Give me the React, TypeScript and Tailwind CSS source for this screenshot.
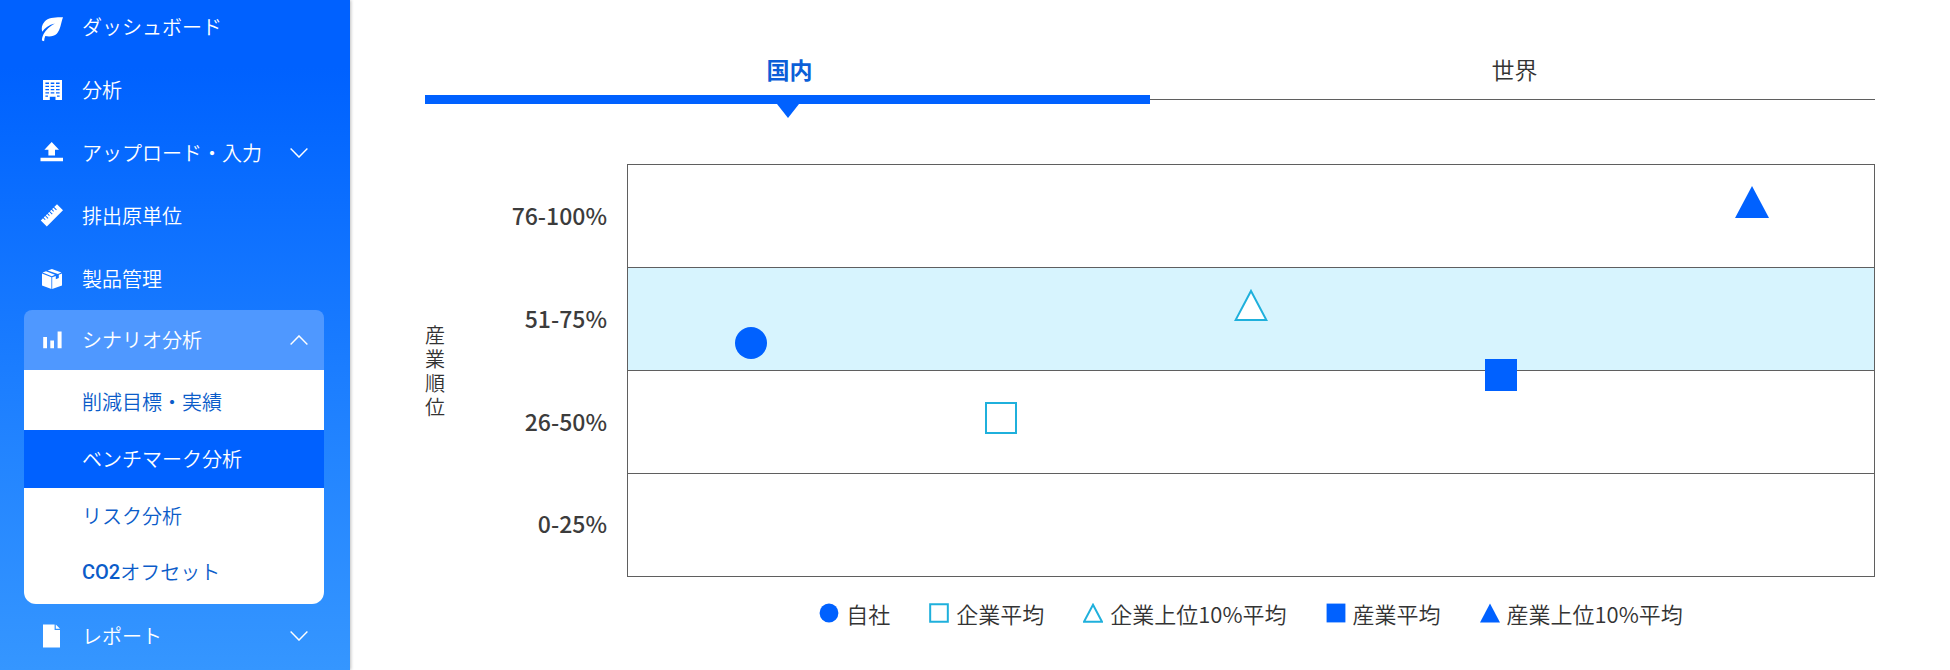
import { useState } from "react";
import type { ReactNode } from "react";

type IconProps = { children: ReactNode };

function Icon({ children }: IconProps) {
  return (
    <svg viewBox="0 0 24 24" className="size-6 shrink-0 overflow-visible" fill="currentColor" aria-hidden="true">
      {children}
    </svg>
  );
}

function LeafIcon() {
  return (
    <Icon>
      <path d="M23 2.3C15.4 2.1 8.4 2.6 4.7 6.4C1.7 9.5 1.2 13 2.2 16.8C5 12.6 8.9 9.9 14.8 8.4C9.7 11.2 5.9 14.7 3.6 19C2.5 21.2 1.9 23.3 1.9 25.6L4.1 26.2C4.2 24.4 4.6 22.6 5.3 21C9.5 22 13.9 21.4 16.8 18.7C20.6 15 20.8 8 23 2.3Z" />
    </Icon>
  );
}

function BuildingIcon() {
  return (
    <Icon>
      <path
        fillRule="evenodd"
        d="M3 2H22V22H15.5V18.8H9.8V22H3ZM5.4 4.6V5.9H9V4.6ZM10.7 4.6V5.9H14.3V4.6ZM16 4.6V5.9H19.6V4.6ZM5.4 7.8V9.1H9V7.8ZM10.7 7.8V9.1H14.3V7.8ZM16 7.8V9.1H19.6V7.8ZM5.4 11V12.3H9V11ZM10.7 11V12.3H14.3V11ZM16 11V12.3H19.6V11ZM5.4 14.2V15.5H9V14.2ZM10.7 14.2V15.5H14.3V14.2ZM16 14.2V15.5H19.6V14.2ZM5.4 17.4V18.7H8V17.4ZM17 17.4V18.7H19.6V17.4Z"
      />
    </Icon>
  );
}

function UploadIcon() {
  return (
    <Icon>
      <path d="M11.7 1L19 8.8H15V14.5H8.4V8.8H4.4ZM0.5 16.7H23V20.3H0.5Z" />
    </Icon>
  );
}

function RulerIcon() {
  return (
    <Icon>
      <path d="M0.8 16.4L3 14.2L4.9 16.1L5.6 15.4L3.7 13.5L5.1 12.1L7.7 14.7L8.4 14L5.8 11.4L7.2 10L9.1 11.9L9.8 11.2L7.9 9.3L9.3 7.9L11.9 10.5L12.6 9.8L10 7.2L11.4 5.8L13.3 7.7L14 7L12.1 5.1L13.5 3.7L16.1 6.3L16.8 5.6L14.2 3L17 0.2L23 6.2L6.8 22.4Z" />
    </Icon>
  );
}

function BoxIcon() {
  return (
    <Icon>
      <path d="M2 6.6L11.4 10.3V22L2 18.4ZM12.2 10.3L15.8 8.9V12.3L18.8 11.1V7.7L22 6.5V18.4L12.2 22ZM2.6 5.6L6 4.3L15 7.8L11.8 9.2ZM7.6 3.6L11.9 1.9L21.4 5.5L17.9 6.9Z" />
    </Icon>
  );
}

function BarsIcon() {
  return (
    <Icon>
      <path d="M3.2 9H7V20.3H3.2ZM10.3 12.6H14V20.3H10.3ZM17.6 3.4H21.6V20.3H17.6Z" />
    </Icon>
  );
}

function DocumentIcon() {
  return (
    <Icon>
      <path d="M3 0.5H14.6V6H20V23.5H3ZM15.8 0.5L20 4.8H15.8Z" />
    </Icon>
  );
}

function Chevron({ up = false }: { up?: boolean }) {
  return (
    <svg
      viewBox="0 0 18 10"
      className="ml-auto h-[10px] w-[18px]"
      fill="none"
      stroke="currentColor"
      strokeWidth="1.4"
      aria-hidden="true"
    >
      <path d={up ? "M0.6 9.4L9 0.9L17.4 9.4" : "M0.6 0.6L9 9.1L17.4 0.6"} />
    </svg>
  );
}

const rowClass = "flex h-[63px] w-full items-center gap-[18px] pr-4 pl-4 text-left text-white";

function NavLink({ icon, label }: { icon: ReactNode; label: string }) {
  return (
    <li>
      <a href="#" className={rowClass}>
        {icon}
        <span>{label}</span>
      </a>
    </li>
  );
}

function NavGroup({ icon, label }: { icon: ReactNode; label: string }) {
  return (
    <li>
      <button type="button" aria-expanded="false" className={rowClass}>
        {icon}
        <span>{label}</span>
        <Chevron />
      </button>
    </li>
  );
}

function Sidebar() {
  return (
    <aside className="w-[350px] shrink-0 overflow-hidden bg-linear-to-b from-[#0061ff] from-10% to-[#3596ff] pr-[26px] pl-6 text-xl font-[350] shadow-[1px_0_3px_rgba(0,0,0,0.25)]">
      <nav className="-mt-[5px]">
        <ul>
          <NavLink icon={<LeafIcon />} label="ダッシュボード" />
          <NavLink icon={<BuildingIcon />} label="分析" />
          <NavGroup icon={<UploadIcon />} label="アップロード・入力" />
          <NavLink icon={<RulerIcon />} label="排出原単位" />
          <NavLink icon={<BoxIcon />} label="製品管理" />
          <li className="overflow-hidden rounded-t-lg rounded-b-xl">
            <button
              type="button"
              aria-expanded="true"
              className="flex h-[60px] w-full items-center gap-[18px] bg-[#4f98ff] pr-4 pl-4 text-left text-white"
            >
              <BarsIcon />
              <span>シナリオ分析</span>
              <Chevron up />
            </button>
            <ul className="bg-white pb-1 text-[#0b5cc9]">
              <li>
                <a href="#" className="flex h-[60px] items-center pt-1 pl-[58px]">
                  削減目標・実績
                </a>
              </li>
              <li>
                <a
                  href="#"
                  aria-current="page"
                  className="flex h-[58px] items-center bg-[#0061ff] pl-[58px] text-white"
                >
                  ベンチマーク分析
                </a>
              </li>
              <li>
                <a href="#" className="flex h-14 items-center pl-[58px]">
                  リスク分析
                </a>
              </li>
              <li>
                <a href="#" className="flex h-14 items-center pl-[58px]">
                  <span className="font-['Roboto','Noto_Sans_CJK_JP',sans-serif] font-medium">CO2</span>
                  オフセット
                </a>
              </li>
            </ul>
          </li>
          <NavGroup icon={<DocumentIcon />} label="レポート" />
        </ul>
      </nav>
    </aside>
  );
}

type Shape = "circle" | "square-outline" | "triangle-outline" | "square" | "triangle";

function Marker({ shape, className }: { shape: Shape; className: string }) {
  const outline = { fill: "#ffffff", stroke: "#1fb0dc", strokeWidth: 2, vectorEffect: "non-scaling-stroke" as const };
  return (
    <svg viewBox="0 0 34 34" className={className} fill="#0061ff" aria-hidden="true">
      {shape === "circle" && <circle cx="17" cy="17" r="16" />}
      {shape === "square" && <rect x="1" y="1" width="32" height="32" />}
      {shape === "triangle" && <path d="M17 1L34 33H0Z" />}
      {shape === "square-outline" && <rect x="2" y="2" width="30" height="30" {...outline} />}
      {shape === "triangle-outline" && <path d="M17 3L32.4 32H1.6Z" {...outline} />}
    </svg>
  );
}

const series: { name: string; shape: Shape; left: string; top: string }[] = [
  { name: "自社", shape: "circle", left: "9.9%", top: "43.5%" },
  { name: "企業平均", shape: "square-outline", left: "29.9%", top: "61.6%" },
  { name: "企業上位10%平均", shape: "triangle-outline", left: "50%", top: "34.2%" },
  { name: "産業平均", shape: "square", left: "70.1%", top: "51.2%" },
  { name: "産業上位10%平均", shape: "triangle", left: "90.2%", top: "9.2%" },
];

const bands = [
  { label: "76-100%", active: false },
  { label: "51-75%", active: true },
  { label: "26-50%", active: false },
  { label: "0-25%", active: false },
];

const tabs = ["国内", "世界"];

function Tabs() {
  const [selected, setSelected] = useState(0);
  return (
    <div role="tablist" className="flex">
      {tabs.map((tab, index) => {
        const active = index === selected;
        return (
          <button
            key={tab}
            type="button"
            role="tab"
            aria-selected={active}
            onClick={() => setSelected(index)}
            className="flex flex-1 flex-col text-[23px]"
          >
            <span
              className={
                active
                  ? "flex h-[50px] w-full items-center justify-center pb-0.5 pl-1 font-bold text-[#0b5fd8]"
                  : "flex h-[50px] w-full items-center justify-center pb-0.5 pl-1 font-[350] text-[#333333]"
              }
            >
              {tab}
            </span>
            <span className="relative flex h-[9px] w-full items-center">
              <span className={active ? "h-full w-full bg-[#0061ff]" : "h-px w-full bg-[#5f5f5f]"} />
              {active && (
                <svg
                  viewBox="0 0 22 14"
                  className="absolute top-full left-1/2 h-[14px] w-[22px] -translate-x-1/2"
                  fill="#0061ff"
                  aria-hidden="true"
                >
                  <path d="M0 0H22L11 14Z" />
                </svg>
              )}
            </span>
          </button>
        );
      })}
    </div>
  );
}

function BenchmarkChart() {
  return (
    <figure className="mt-[60px]">
      <div className="flex">
        <div className="flex w-5 items-center text-xl leading-6 font-[350] text-[#333333]">産業順位</div>
        <div className="grid w-[182px] grid-rows-4 pr-5 pb-0.5 text-right text-[23px] font-medium text-[#3c3c3c]">
          {bands.map((band) => (
            <div key={band.label} className="flex items-center justify-end">
              {band.label}
            </div>
          ))}
        </div>
        <div className="relative grid h-[413px] flex-1 grid-rows-4 border-x border-b border-[#5f5f5f]">
          {bands.map((band) => (
            <div
              key={band.label}
              className={
                band.active
                  ? "border-t border-[#5f5f5f] bg-[#d7f4fe]"
                  : "border-t border-[#5f5f5f]"
              }
            />
          ))}
          {series.map((item) => (
            <div
              key={item.name}
              className="absolute -translate-x-1/2 -translate-y-1/2"
              style={{ left: item.left, top: item.top }}
            >
              <Marker shape={item.shape} className="size-[34px]" />
            </div>
          ))}
        </div>
      </div>
      <figcaption className="mt-[18px] ml-[202px]">
        <ul className="flex flex-wrap justify-center gap-x-[39px] text-[22px] leading-9 font-[350] text-[#333333]">
          {series.map((item) => (
            <li key={item.name} className="flex items-center gap-[7px]">
              <Marker shape={item.shape} className="size-5" />
              {item.name}
            </li>
          ))}
        </ul>
      </figcaption>
    </figure>
  );
}

export default function App() {
  return (
    <div
      lang="ja"
      className="flex min-h-screen bg-white font-['Noto_Sans_CJK_JP',sans-serif]"
    >
      <Sidebar />
      <main className="min-w-0 flex-1 px-[75px] pt-[45px]">
        <Tabs />
        <BenchmarkChart />
      </main>
    </div>
  );
}
